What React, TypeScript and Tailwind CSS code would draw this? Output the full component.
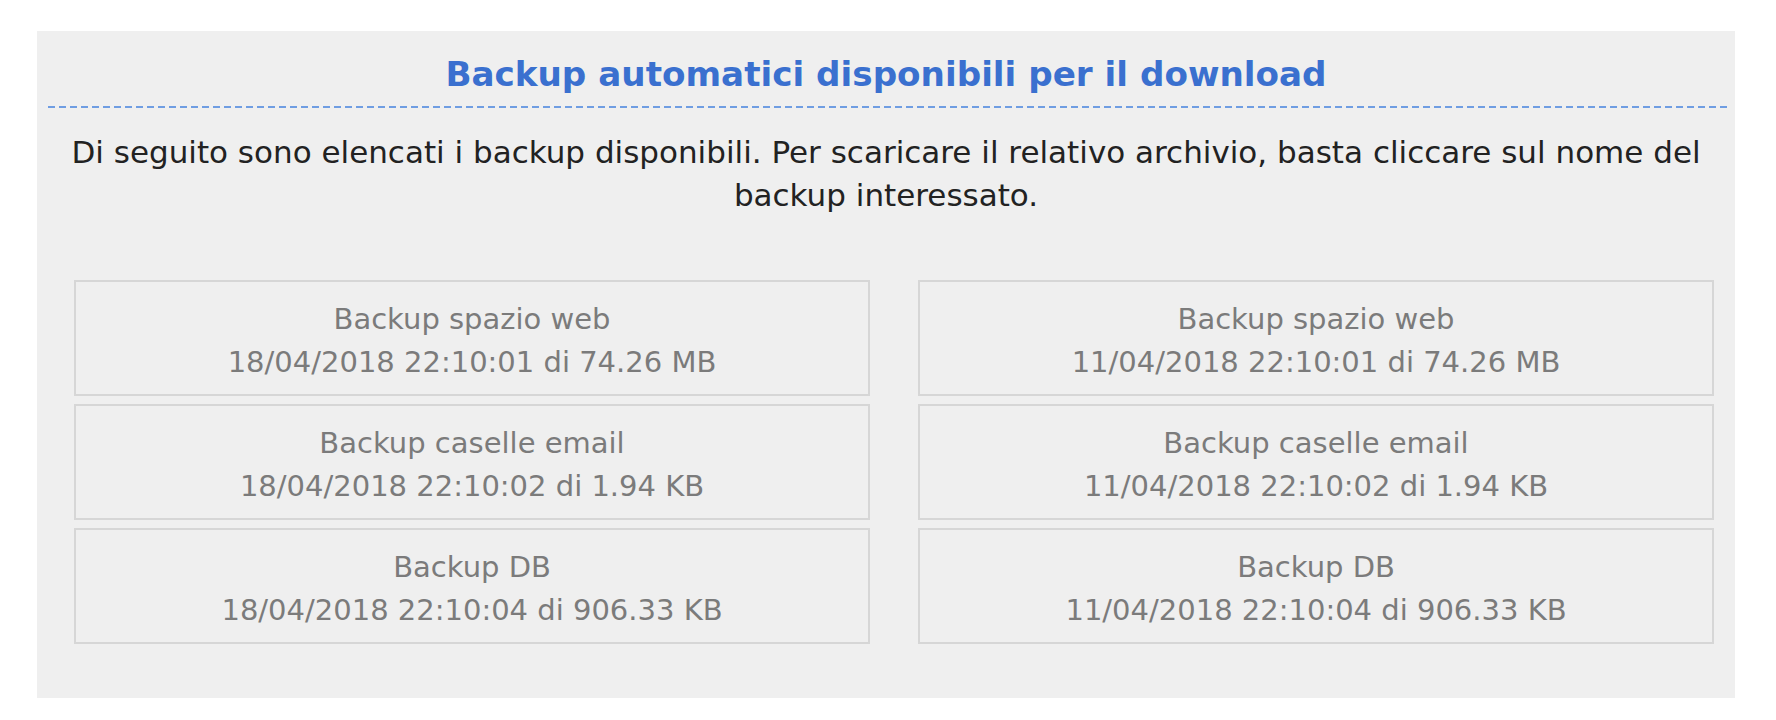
const backups = [
  [
    { name: "Backup spazio web", info: "18/04/2018 22:10:01 di 74.26 MB" },
    { name: "Backup spazio web", info: "11/04/2018 22:10:01 di 74.26 MB" },
  ],
  [
    { name: "Backup caselle email", info: "18/04/2018 22:10:02 di 1.94 KB" },
    { name: "Backup caselle email", info: "11/04/2018 22:10:02 di 1.94 KB" },
  ],
  [
    { name: "Backup DB", info: "18/04/2018 22:10:04 di 906.33 KB" },
    { name: "Backup DB", info: "11/04/2018 22:10:04 di 906.33 KB" },
  ],
];

function BackupBox({ name, info }: { name: string; info: string }) {
  return (
    <a
      href="#"
      className="flex h-[116px] flex-col items-center justify-center border-2 border-[#d6d6d6] bg-[#efefef] pt-[6px] text-[29px] leading-[43px] text-[#7b7b7b] no-underline"
    >
      <span>{name}</span>
      <span>{info}</span>
    </a>
  );
}

export default function App() {
  return (
    <div className="min-h-screen bg-white pl-[37px] pt-[31px] font-['DejaVu_Sans',sans-serif]">
      <div className="w-[1698px] bg-[#efefef] pb-[54px] pt-[19px]">
        <h2 className="text-center text-[34.2px] font-bold leading-[48px] text-[#3a70cf]">
          Backup automatici disponibili per il download
        </h2>
        <div className="ml-[11px] mr-[8px] mt-[8px] h-[2px] bg-[linear-gradient(to_right,#6f9de2_7px,transparent_7px)] bg-[length:11px_2px] bg-repeat-x" />
        <p className="mt-[23px] text-center text-[31px] leading-[43px] text-[#222222]">
          Di seguito sono elencati i backup disponibili. Per scaricare il relativo archivio, basta cliccare sul nome del
          <br />
          backup interessato.
        </p>
        <div className="ml-[37px] mr-[21px] mt-[63px] grid grid-cols-2 gap-x-12 gap-y-2">
          {backups.flat().map((b, i) => (
            <BackupBox key={i} name={b.name} info={b.info} />
          ))}
        </div>
      </div>
    </div>
  );
}
